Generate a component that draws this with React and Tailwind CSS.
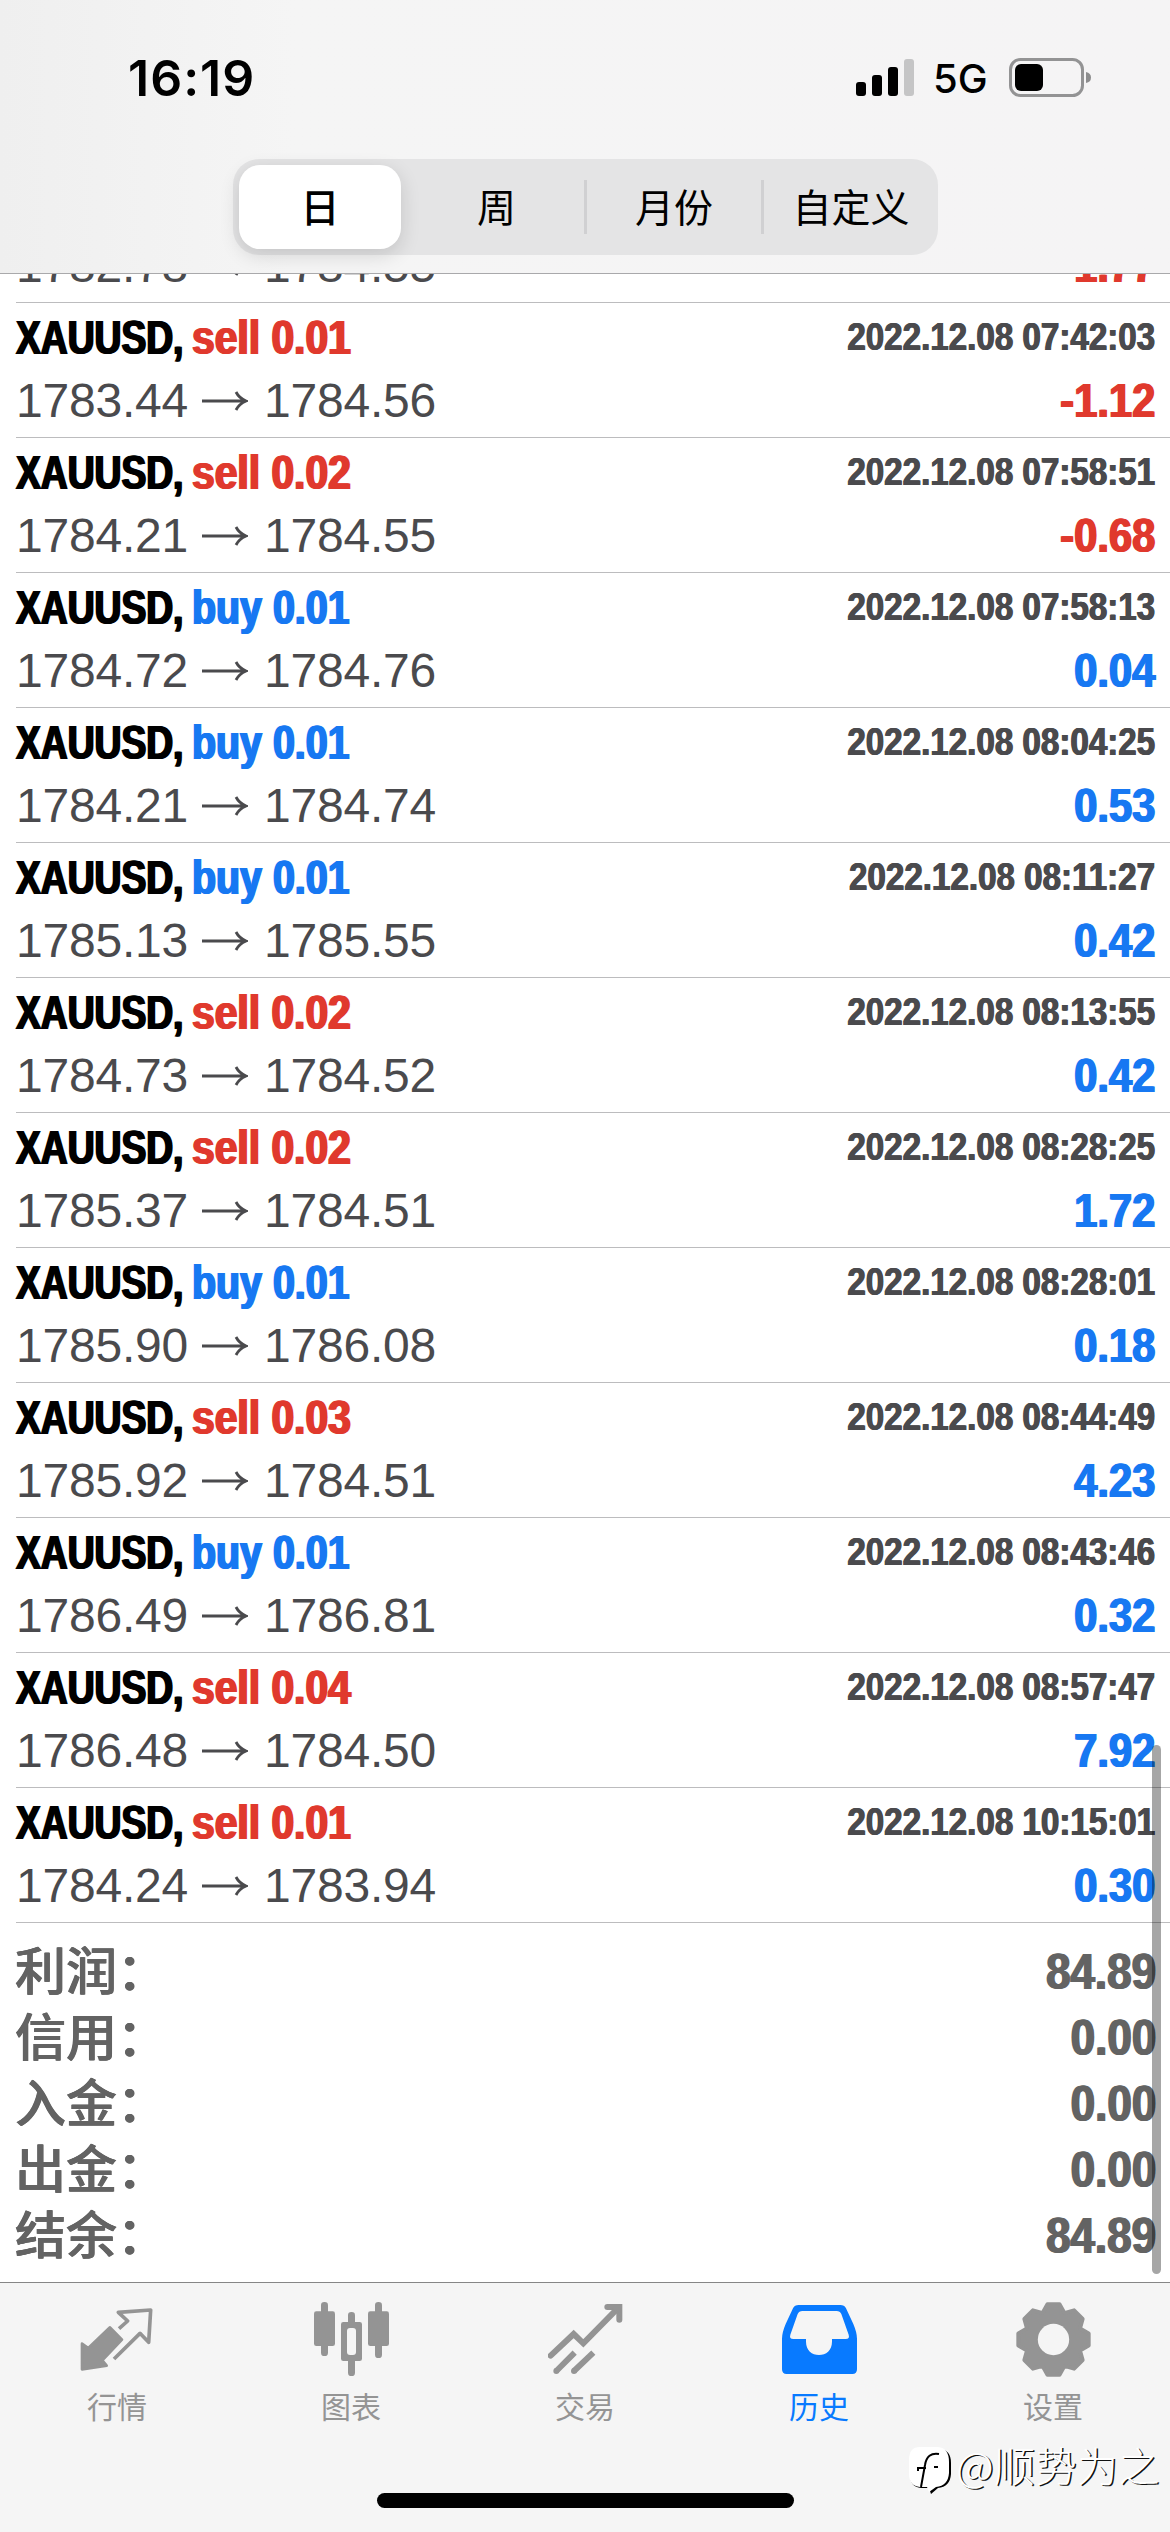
import clsx from "clsx";

const periods = ["日", "周", "月份", "自定义"];

const deals = [
  { side: "sell", lot: "0.01", open: "1783.44", close: "1784.56", time: "2022.12.08 07:42:03", profit: "-1.12" },
  { side: "sell", lot: "0.02", open: "1784.21", close: "1784.55", time: "2022.12.08 07:58:51", profit: "-0.68" },
  { side: "buy", lot: "0.01", open: "1784.72", close: "1784.76", time: "2022.12.08 07:58:13", profit: "0.04" },
  { side: "buy", lot: "0.01", open: "1784.21", close: "1784.74", time: "2022.12.08 08:04:25", profit: "0.53" },
  { side: "buy", lot: "0.01", open: "1785.13", close: "1785.55", time: "2022.12.08 08:11:27", profit: "0.42" },
  { side: "sell", lot: "0.02", open: "1784.73", close: "1784.52", time: "2022.12.08 08:13:55", profit: "0.42" },
  { side: "sell", lot: "0.02", open: "1785.37", close: "1784.51", time: "2022.12.08 08:28:25", profit: "1.72" },
  { side: "buy", lot: "0.01", open: "1785.90", close: "1786.08", time: "2022.12.08 08:28:01", profit: "0.18" },
  { side: "sell", lot: "0.03", open: "1785.92", close: "1784.51", time: "2022.12.08 08:44:49", profit: "4.23" },
  { side: "buy", lot: "0.01", open: "1786.49", close: "1786.81", time: "2022.12.08 08:43:46", profit: "0.32" },
  { side: "sell", lot: "0.04", open: "1786.48", close: "1784.50", time: "2022.12.08 08:57:47", profit: "7.92" },
  { side: "sell", lot: "0.01", open: "1784.24", close: "1783.94", time: "2022.12.08 10:15:01", profit: "0.30" },
];

const totals = [
  ["利润：", "84.89"],
  ["信用：", "0.00"],
  ["入金：", "0.00"],
  ["出金：", "0.00"],
  ["结余：", "84.89"],
];

// eight teeth around (112.5, 112.5)
const gearPoints = Array.from({ length: 8 }, (_, i) => {
  const a = (i * Math.PI) / 4;
  return [
    [-0.375, 87],
    [-0.17, 107],
    [0.17, 107],
    [0.375, 87],
  ]
    .map(([d, r]) => `${(112.5 + r * Math.sin(a + d)).toFixed(1)},${(112.5 - r * Math.cos(a + d)).toFixed(1)}`)
    .join(" ");
}).join(" ");

function QuotesIcon() {
  return (
    <svg viewBox="0 0 225 225" className="size-[75px]" fill="none" stroke="currentColor" strokeLinejoin="round">
      <path d="M90 76 126 113 67 175 80 191 6 202V125L25 138Z" fill="currentColor" strokeWidth="8" />
      <path d="M117 80 143 57 115 31 212 24 206 121 180 94 102 171" strokeWidth="11" />
    </svg>
  );
}

function ChartIcon() {
  return (
    <svg viewBox="0 0 225 225" className="size-[75px]" fill="currentColor">
      <rect x="21" width="21" height="162" rx="10" />
      <rect y="28" width="63" height="104" rx="7" />
      <rect x="183" width="21" height="168" rx="10" />
      <rect x="162" y="28" width="63" height="104" rx="7" />
      <rect x="102" y="30" width="21" height="192" rx="10" />
      <rect x="81" y="60" width="63" height="117" rx="7" />
      <rect x="99" y="78" width="27" height="81" rx="9" fill="#f5f5f5" />
    </svg>
  );
}

function TradeIcon() {
  return (
    <svg viewBox="0 0 225 225" className="size-[75px]" fill="none" stroke="currentColor" strokeWidth="18">
      <path d="M8 161 77 96 106 124 212 16" strokeLinecap="round" strokeLinejoin="miter" />
      <path d="M178 15H214V53" strokeLinecap="round" />
      <path d="M190 15H215V40Z" fill="currentColor" strokeWidth="4" />
      <path d="M25 207 80 152M78 207 136 152" />
      <g fill="currentColor" stroke="none">
        <circle cx="25" cy="207" r="9" />
        <circle cx="78" cy="207" r="9" />
      </g>
    </svg>
  );
}

function HistoryIcon() {
  return (
    <svg viewBox="0 0 225 225" className="size-[75px]" fill="currentColor">
      <path
        fillRule="evenodd"
        d="M50 9H175Q187 9 192 19L214 66Q225 92 225 110V202Q225 216 211 216H14Q0 216 0 202V110Q0 92 11 66L33 19Q38 9 50 9ZM61 27Q51 27 47 36L25 98Q21 111 34 111H72V119C72 145 90 159 111 159C132 159 150 145 150 119V111H191Q204 111 200 98L178 36Q174 27 164 27Z"
      />
    </svg>
  );
}

function SettingsIcon() {
  return (
    <svg viewBox="0 0 225 225" className="size-[75px]">
      <polygon points={gearPoints} fill="currentColor" stroke="currentColor" strokeWidth="12" strokeLinejoin="round" />
      <circle cx="112.5" cy="112.5" r="47" fill="#f5f5f5" />
    </svg>
  );
}

const tabs = [
  { label: "行情", Icon: QuotesIcon },
  { label: "图表", Icon: ChartIcon },
  { label: "交易", Icon: TradeIcon },
  { label: "历史", Icon: HistoryIcon, active: true },
  { label: "设置", Icon: SettingsIcon },
];

function StatusBar() {
  return (
    <div className="flex h-[159px] items-start justify-between pl-[128px] pr-[78px] pt-[48px] text-black">
      <span className="font-['Inter'] text-[50px] font-semibold leading-[60px] tracking-[1px]">16:19</span>
      <div className="flex items-start">
        <div className="mt-[11px] flex h-[37px] items-end gap-[6px]">
          <i className="h-[14px] w-[10px] rounded-[3px] bg-black" />
          <i className="h-[21px] w-[10px] rounded-[3px] bg-black" />
          <i className="h-[29px] w-[10px] rounded-[3px] bg-black" />
          <i className="h-[37px] w-[10px] rounded-[3px] bg-[#c5c5c6]" />
        </div>
        <span className="ml-[19px] w-[76px] font-['Inter'] text-[40px] font-medium leading-[62px]">5G</span>
        <svg viewBox="0 0 83 39" className="mt-[10px] h-[39px] w-[83px]">
          <rect x="1.5" y="1.5" width="72" height="36" rx="10" fill="none" stroke="#939394" strokeWidth="3" />
          <rect x="6" y="6" width="28" height="27" rx="6" />
          <path d="M77 14Q82 15 82 19.500T77 25Z" fill="#8d8d8e" />
        </svg>
      </div>
    </div>
  );
}

function PeriodSwitch() {
  return (
    <div className="ml-[233px] flex h-[96px] w-[705px] items-center rounded-[26px] bg-[#e4e4e5] pl-[6px]">
      {periods.map((period, index) => (
        <div
          key={period}
          className={clsx(
            "flex shrink-0 items-center justify-center pb-[4px] text-[39px] leading-none text-black",
            index === 0 && "mr-[8px] h-[84px] w-[162px] rounded-[21px] bg-white font-medium shadow-[0_6px_20px_rgba(0,0,0,0.14)]",
            index === 1 && "h-[54px] w-[175px]",
            index === 2 && "h-[54px] w-[180px] border-x-[3px] border-[#d0d0d2]",
            index === 3 && "h-[54px] w-[174px]"
          )}
        >
          {period}
        </div>
      ))}
    </div>
  );
}

function PriceLine({ open, close, profit }) {
  const profitColor = profit.startsWith("-") ? "text-[#e0392d]" : "text-[#1778f2]";
  return (
    <div className="flex h-[63px] justify-between text-[48px] leading-[63px] text-[#4a4a4d]">
      <p className="flex items-center tracking-[-0.2px]">
        <span className="w-[186px]">{open}</span>
        <svg viewBox="0 0 46 20" className="mr-[16px] h-[20px] w-[46px]" fill="none" stroke="currentColor" strokeWidth="2.800">
          <path d="M0 10H44M34 1Q37 7 44 10Q37 13 34 19" />
        </svg>
        <span>{close}</span>
      </p>
      <p className={clsx("origin-right scale-x-[0.87] font-bold [text-shadow:1px_0_currentColor,-1px_0_currentColor]", profitColor)}>
        {profit}
      </p>
    </div>
  );
}

function DealRow({ deal }) {
  const sideStyle = deal.side === "sell" ? "scale-x-[0.85] text-[#e0392d]" : "scale-x-[0.82] text-[#1778f2]";
  return (
    <li className="ml-[16px] h-[135px] border-b border-[#bcbcbe] pr-[15px] pt-[3px]">
      <div className="flex h-[63px] justify-between whitespace-nowrap font-bold">
        <p className="flex text-[48px] leading-[63px]">
          <span className="w-[176px] origin-left scale-x-[0.775] text-black [text-shadow:1.3px_0_currentColor,-1.3px_0_currentColor]">
            XAUUSD,
          </span>
          <span className={clsx("origin-left [text-shadow:1.2px_0_currentColor,-1.2px_0_currentColor]", sideStyle)}>
            {deal.side} {deal.lot}
          </span>
        </p>
        <time className="origin-right scale-x-[0.85] text-[39px] leading-[61px] text-[#4a4a4d] [text-shadow:0.7px_0_currentColor,-0.7px_0_currentColor]">
          {deal.time}
        </time>
      </div>
      <PriceLine open={deal.open} close={deal.close} profit={deal.profit} />
    </li>
  );
}

function Watermark() {
  return (
    <div className="absolute bottom-[38px] right-[10px] flex items-center">
      <svg viewBox="0 0 44 48" className="mr-[3px] mt-[4px] h-[48px] w-[44px]">
        <path d="M12 3H31Q42 4 42 17V28Q41 41 29 42L22 48 20 42H12Q1 41 1 29V15Q2 3 12 3Z" fill="#000" />
        <path d="M11 1H29Q40 2 40 16V27Q39 40 27 41L20 46 18 41H11Q0 40 0 28V14Q0 1 11 1Z" fill="#fff" />
        <path d="M30 8Q18 6 16 19L12 41M9 25V22H17M25 21H29" fill="none" stroke="#000" strokeWidth="2" />
      </svg>
      <span className="-mt-[9px] text-[41px] font-light leading-[60px] tracking-[0.5px] text-white [text-shadow:1.5px_1px_0_#111]">
        @顺势为之
      </span>
    </div>
  );
}

export default function App() {
  return (
    <div className="relative flex h-[2532px] w-[1170px] flex-col overflow-hidden bg-white font-['Noto_Sans_CJK_SC',sans-serif]">
      <header className="relative z-10 h-[274px] shrink-0 border-b border-[#a9a9ab] bg-linear-to-r from-[#efefef] via-[#f5f5f5] via-25% to-[#f5f4f5]">
        <StatusBar />
        <PeriodSwitch />
      </header>

      <main className="-mt-[40px] h-[2048px] shrink-0">
        <ul className="font-['Liberation_Sans']">
          {/* scrolled halfway under the header */}
          <li className="ml-[16px] h-[69px] border-b border-[#bcbcbe] pr-[15px]">
            <PriceLine open="1782.78" close="1784.55" profit="-1.77" />
          </li>
          {deals.map((deal) => (
            <DealRow key={deal.time} deal={deal} />
          ))}
        </ul>
        <dl className="pl-[15px] pr-[14px] pt-[14px] text-[#636363]">
          {totals.map(([label, value]) => (
            <div key={label} className="flex h-[66px] justify-between">
              <dt className="text-[51px] font-medium leading-[62px] [text-shadow:0.4px_0_currentColor,-0.4px_0_currentColor]">
                {label}
              </dt>
              <dd className="origin-right scale-x-[0.88] font-['Liberation_Sans'] text-[50px] font-bold leading-[70px] [text-shadow:1px_0_currentColor,-1px_0_currentColor]">
                {value}
              </dd>
            </div>
          ))}
        </dl>
      </main>
      <div className="absolute left-[1152px] top-[1745px] h-[529px] w-[9px] rounded-full bg-black/35" />

      <footer className="relative flex h-[250px] shrink-0 flex-col items-center border-t border-[#868686] bg-[#f5f5f5]">
        <nav className="flex w-full pt-[19px]">
          {tabs.map(({ label, Icon, active }) => (
            <a
              key={label}
              className={clsx("flex w-[234px] flex-col items-center", active ? "text-[#087aff]" : "text-[#949494]")}
            >
              <Icon />
              <span className="mt-[7px] text-[30px] leading-[42px]">{label}</span>
            </a>
          ))}
        </nav>
        <div className="mt-[67px] h-[15px] w-[417px] rounded-full bg-black" />
        <Watermark />
      </footer>
    </div>
  );
}
